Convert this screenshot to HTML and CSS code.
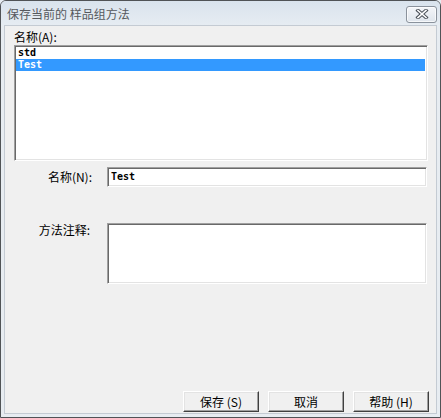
FILE: index.html
```html
<!DOCTYPE html>
<html lang="zh">
<head>
<meta charset="utf-8">
<title>保存当前的 样品组方法</title>
<link rel="stylesheet" href="styles.css">
</head>
<body>
<div class="window">
  <div class="titlebar">
    <span class="title">保存当前的 样品组方法</span>
    <div class="close">
      <svg width="14" height="10" viewBox="0 0 14 10">
        <path d="M3 1.5 L11 8.5 M11 1.5 L3 8.5" stroke="#4a5058" stroke-width="3.6" stroke-linecap="square" fill="none"/>
        <path d="M3 1.5 L11 8.5 M11 1.5 L3 8.5" stroke="#ffffff" stroke-width="1.6" stroke-linecap="square" fill="none"/>
      </svg>
    </div>
  </div>
  <div class="client">
    <div class="lbl-top">名称(A):</div>
    <div class="listbox">
      <div class="item">std</div>
      <div class="item sel">Test</div>
    </div>
    <div class="row row-name">
      <div class="lbl">名称(N):</div>
      <div class="input">Test</div>
    </div>
    <div class="row row-note">
      <div class="lbl lbl-note">方法注释:</div>
      <div class="textarea"></div>
    </div>
    <div class="buttons">
      <div class="btn">保存 (S)</div>
      <div class="btn">取消</div>
      <div class="btn">帮助 (H)</div>
    </div>
  </div>
</div>
</body>
</html>
```
FILE: styles.css
```css
html, body {
  margin: 0;
  padding: 0;
  background: #e6ecf2;
}
.window {
  width: 441px;
  height: 418px;
  box-sizing: border-box;
  border: 1px solid #505356;
  border-radius: 6px 6px 0 0;
  background: #e7ecf1;
  display: flex;
  flex-direction: column;
  font-family: "Noto Sans CJK SC", "Liberation Sans", sans-serif;
  font-size: 12px;
  color: #000;
}
.titlebar {
  height: 24px;
  flex: none;
  display: flex;
  align-items: center;
  justify-content: space-between;
  padding: 0 3px 0 6px;
  background: linear-gradient(#d9e3ed, #e6ecf2);
  border-radius: 5px 5px 0 0;
}
.title {
  color: #55595e;
  font-size: 12px;
  line-height: 14px;
  margin-top: 1px;
}
.close {
  width: 29px;
  height: 15px;
  border: 1px solid #8a929c;
  border-radius: 3px;
  background: linear-gradient(#f4f6f9, #dfe5ec);
  display: flex;
  align-items: center;
  justify-content: center;
  margin-top: 2px;
  box-shadow: inset 0 0 0 1px rgba(255,255,255,0.7);
}
.client {
  flex: 1;
  margin: 0 3px 3px 3px;
  border: 1px solid #c4cbd3;
  background: #f0f0f0;
  display: flex;
  flex-direction: column;
  padding: 4px 8px 1px 9px;
}
.lbl-top {
  line-height: 14px;
  height: 14px;
  margin-bottom: 1px;
}
.listbox {
  height: 116px;
  box-sizing: border-box;
  background: #fff;
  border-top: 1px solid #a0a0a0;
  border-left: 1px solid #a0a0a0;
  border-right: 1px solid #ffffff;
  border-bottom: 1px solid #ffffff;
  box-shadow: inset 1px 1px 0 #696969, inset -1px -1px 0 #e3e3e3;
  padding: 1px 2px 1px 1px;
}
.item {
  font-family: "DejaVu Sans Mono", monospace;
  font-weight: bold;
  font-size: 10px;
  line-height: 12px;
  height: 12px;
  padding-left: 2px;
  color: #000;
}
.item.sel {
  background: #3399ff;
  color: #fff;
}
.row {
  display: flex;
}
.row-name {
  margin-top: 6px;
  align-items: center;
}
.row-note {
  margin-top: 36px;
  align-items: flex-start;
}
.lbl {
  width: 78px;
  text-align: right;
  line-height: 14px;
  margin-right: 15px;
}
.lbl-note {
  margin-right: 17px;
  width: 76px;
}
.input, .textarea {
  width: 320px;
  box-sizing: border-box;
  background: #fff;
  border-top: 1px solid #a0a0a0;
  border-left: 1px solid #a0a0a0;
  border-right: 1px solid #ffffff;
  border-bottom: 1px solid #ffffff;
  box-shadow: inset 1px 1px 0 #696969, inset -1px -1px 0 #e3e3e3;
}
.input {
  height: 20px;
  font-family: "DejaVu Sans Mono", monospace;
  font-weight: bold;
  font-size: 10px;
  line-height: 17px;
  padding-left: 3px;
}
.textarea {
  height: 61px;
}
.buttons {
  margin-top: auto;
  margin-right: -1px;
  display: flex;
  justify-content: flex-end;
  gap: 9px;
}
.btn {
  width: 76px;
  height: 21px;
  box-sizing: border-box;
  border-top: 1px solid #ffffff;
  border-left: 1px solid #ffffff;
  border-right: 1px solid #404040;
  border-bottom: 1px solid #404040;
  box-shadow: inset -1px -1px 0 #a0a0a0, inset 1px 1px 0 #e3e3e3;
  background: #f0f0f0;
  text-align: center;
  line-height: 19px;
  font-size: 12px;
}
```
